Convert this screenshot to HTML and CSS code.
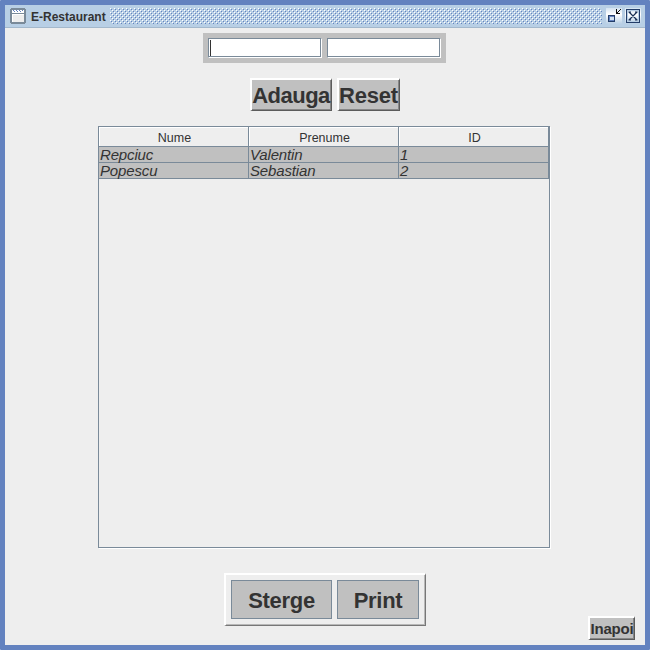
FILE: index.html
```html
<!DOCTYPE html>
<html lang="ro">
<head>
<meta charset="utf-8">
<title>E-Restaurant</title>
<link rel="stylesheet" href="styles.css">
</head>
<body>
<div class="window">
  <header class="titlebar">
    <svg class="app-icon" width="16" height="16" shape-rendering="crispEdges">
      <rect x="1" width="14" height="16" fill="#7a8a99"/><rect y="1" width="16" height="14" fill="#7a8a99"/>
      <rect x="2" y="2" width="12" height="12" fill="#fff"/>
      <path d="M3 2.5H14M4 3.5H13" stroke="#6382bf" stroke-dasharray="1 2"/>
      <path d="M2 5.5H14" stroke="#7a8a99"/>
      <rect x="2" y="6" width="12" height="8" fill="#eee"/><path d="M2 6.5H14M2.5 6V14" stroke="#fff"/>
    </svg>
    <span class="title">E-Restaurant</span>
    <svg class="bumps" width="492" height="16" shape-rendering="crispEdges">
      <defs><pattern id="bump" width="4" height="4" patternUnits="userSpaceOnUse">
        <path d="M0 0h1v1H0zM2 2h1v1H2z" fill="#fff"/><path d="M1 1h1v1H1zM3 3h1v1H3z" fill="#6382bf"/>
      </pattern></defs>
      <rect width="492" height="16" fill="url(#bump)"/>
    </svg>
    <svg class="win-icon" width="16" height="16" shape-rendering="crispEdges">
      <defs><linearGradient id="shine" x2="0" y2="1"><stop stop-color="#d4e2f0"/><stop offset=".4" stop-color="#fff"/><stop offset="1" stop-color="#b8cfe5"/></linearGradient></defs>
      <rect width="16" height="16" fill="url(#shine)"/>
      <rect x="2" y="7" width="7" height="7" fill="#233d69"/>
      <rect x="3" y="8" width="5" height="5" fill="#6382bf"/>
      <rect x="4" y="9" width="4" height="3" fill="#d4e2f0"/>
      <path d="M10 1h1v3h1v1h2v1h-4zM12 3h1v1h-1zM13 2h1v1h-1zM14 1h1v1h-1zM11 4h1v1h-1z" fill="#111"/>
    </svg>
    <svg class="win-icon close" width="16" height="16">
      <rect width="16" height="16" fill="url(#shine)"/>
      <rect x="1.5" y="1.5" width="13" height="13" fill="url(#shine)" stroke="#233d69"/>
      <rect x="2.5" y="2.5" width="11" height="11" fill="none" stroke="#b8cfe5"/>
      <path d="M3.500 4h2.500M10 4h2.500M3.500 12h2.500M10 12h2.500M4 4l8 8M12 4l-8 8" stroke="#182f54" stroke-width="1.200"/>
    </svg>
  </header>
  <main class="content">
    <div class="fields">
      <div class="field"><i class="caret"></i></div>
      <div class="field"></div>
    </div>
    <div class="actions">
      <button class="bevel adauga"><span>Adauga</span></button>
      <button class="bevel reset"><span>Reset</span></button>
    </div>
    <div class="scroll">
      <div class="row head"><div>Nume</div><div>Prenume</div><div>ID</div></div>
      <div class="row"><div>Repciuc</div><div>Valentin</div><div>1</div></div>
      <div class="row"><div>Popescu</div><div>Sebastian</div><div>2</div></div>
    </div>
    <div class="panel">
      <button class="flat sterge">Sterge</button>
      <button class="flat print">Print</button>
    </div>
    <button class="bevel inapoi"><span>Inapoi</span></button>
  </main>
</div>
</body>
</html>
```
FILE: styles.css
```css
* { box-sizing: border-box; }
body { margin: 0; background: #fff; font-family: "Liberation Sans", Arial, sans-serif; color: #333; }
button { font: bold 22px/1 "Liberation Sans", Arial, sans-serif; color: #333; background: #c0c0c0; padding: 0; display: flex; align-items: center; justify-content: center; white-space: nowrap; border-radius: 0; }
.window { width: 650px; height: 650px; border: 5px solid #6382bf; border-radius: 1px; background: #eee; }
.titlebar { height: 23px; background: #b8cfe5; border-bottom: 1px solid #a3b8cc; display: flex; align-items: flex-start; padding: 3px 4px 0 5px; }
.app-icon, .bumps, .win-icon { flex: none; display: block; }
.title { font: bold 12px/18px "Liberation Sans", Arial, sans-serif; width: 79px; margin-left: 5px; white-space: nowrap; }
.bumps { margin-right: 4px; }
.close { margin-left: 3px; }
.content { display: flex; flex-direction: column; align-items: center; padding: 5px 0 0; height: 617px; }
.fields { display: flex; gap: 5px; padding: 5px; width: 243px; height: 30px; background: #c0c0c0; margin-right: 1px; }
.field { width: 114px; height: 20px; border: 1px solid #7a8a99; border-right-color: #fff; border-bottom-color: #fff; background: #fff; box-shadow: inset -1px -1px #7a8a99; padding: 1px; }
.caret { display: block; width: 1px; height: 16px; background: #333; }
.actions { display: flex; gap: 5px; height: 33px; margin-top: 15px; }
.bevel { border: 2px solid; border-color: #fff #5b5b5b #5b5b5b #fff; border-right-width: 1px; border-bottom-width: 1px; box-shadow: inset -1px -1px #868686; }
.adauga { width: 82px; letter-spacing: -.5px; }
.reset { width: 63px; letter-spacing: -.2px; }
.actions span { position: relative; top: 1px; left: -.5px; }
.scroll { width: 452px; height: 422px; margin: 15px 2px 0 0; border: 1px solid #7a8a99; box-shadow: 1px 1px #fff; }
.row { display: flex; width: 450px; height: 16px; font: italic 15px/15px "Liberation Sans", Arial, sans-serif; letter-spacing: -.15px; background: #c0c0c0; }
.row div { width: 150px; border-right: 1px solid #7a8a99; border-bottom: 1px solid #7a8a99; padding-left: 1px; white-space: nowrap; }
.head { height: 20px; background: #eee; font: 12.5px/22px "Liberation Sans", Arial, sans-serif; letter-spacing: 0; }
.head div { text-align: center; padding: 0 0 0 2px; box-shadow: inset 1px 1px #fff; }
.panel { display: flex; gap: 5px; width: 202px; height: 53px; margin-top: 25px; padding: 5px; border: 2px solid; border-color: #fff #777 #777 #fff; border-right-width: 1px; border-bottom-width: 1px; box-shadow: inset -1px -1px #b8b8b8; }
.flat { border: 1px solid #7a8a99; height: 39px; padding-top: 2px; letter-spacing: -.3px; }
.sterge { width: 101px; }
.print { width: 82px; }
.inapoi { align-self: flex-end; width: 47px; height: 24px; margin: -10px 10px 0 0; font-size: 15px; letter-spacing: -.2px; }
```
